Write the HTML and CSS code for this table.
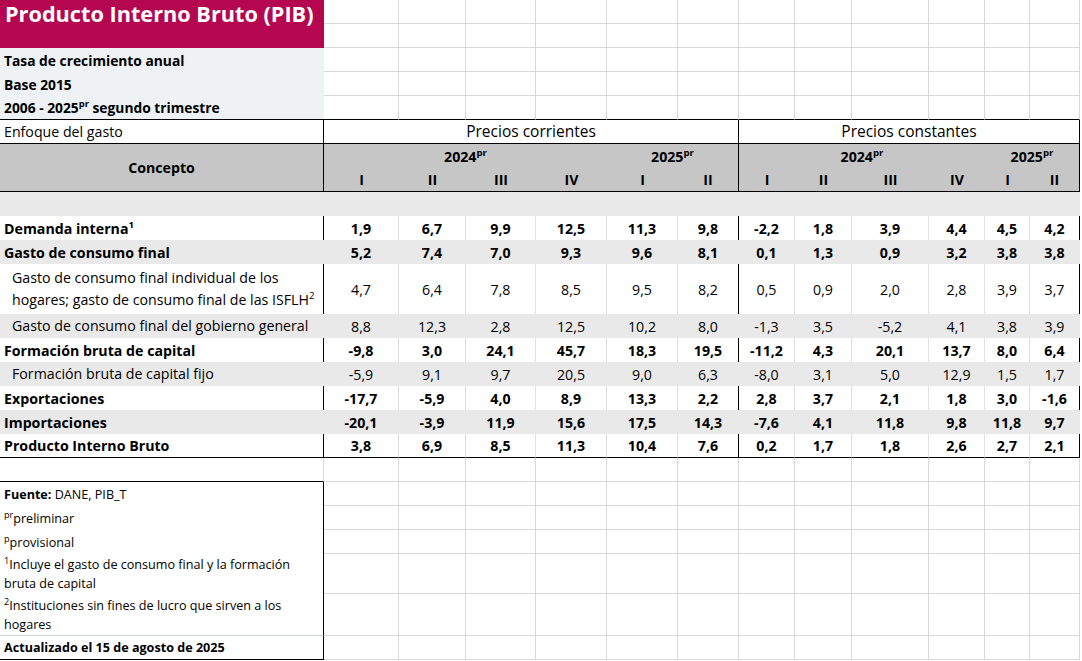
FILE: index.html
```html
<!DOCTYPE html>
<html lang="es">
<head>
<meta charset="utf-8">
<title>Producto Interno Bruto (PIB)</title>
<link rel="stylesheet" href="styles.css">
</head>
<body>
<table class="sheet">
<colgroup>
<col class="ca"><col class="cb"><col class="cc"><col class="cd"><col class="ce"><col class="cf"><col class="cg"><col class="ch"><col class="ci"><col class="cj"><col class="ck"><col class="cl"><col class="cm">
</colgroup>
<tbody>
<tr>
<td class="title" rowspan="2">Producto Interno Bruto (PIB)</td>
<td class="g"></td><td class="g"></td><td class="g"></td><td class="g"></td><td class="g"></td><td class="g"></td><td class="g"></td><td class="g"></td><td class="g"></td><td class="g"></td><td class="g"></td><td class="g"></td>
</tr>
<tr>
<td class="g"></td><td class="g"></td><td class="g"></td><td class="g"></td><td class="g"></td><td class="g"></td><td class="g"></td><td class="g"></td><td class="g"></td><td class="g"></td><td class="g"></td><td class="g"></td>
</tr>
<tr>
<td class="sub">Tasa de crecimiento anual</td>
<td class="g"></td><td class="g"></td><td class="g"></td><td class="g"></td><td class="g"></td><td class="g"></td><td class="g"></td><td class="g"></td><td class="g"></td><td class="g"></td><td class="g"></td><td class="g"></td>
</tr>
<tr>
<td class="sub">Base 2015</td>
<td class="g"></td><td class="g"></td><td class="g"></td><td class="g"></td><td class="g"></td><td class="g"></td><td class="g"></td><td class="g"></td><td class="g"></td><td class="g"></td><td class="g"></td><td class="g"></td>
</tr>
<tr class="sep">
<td class="sub">2006 - 2025<sup>pr</sup> segundo trimestre</td>
<td class="g"></td><td class="g"></td><td class="g"></td><td class="g"></td><td class="g"></td><td class="g"></td><td class="g"></td><td class="g"></td><td class="g"></td><td class="g"></td><td class="g"></td><td class="g"></td>
</tr>
<tr class="sep group">
<td class="lbl br">Enfoque del gasto</td>
<td class="br price" colspan="6">Precios corrientes</td>
<td class="br price" colspan="6">Precios constantes</td>
</tr>
<tr class="head">
<td class="concept br" rowspan="2">Concepto</td>
<td colspan="4">2024<sup>pr</sup></td>
<td class="br" colspan="2">2025<sup>pr</sup></td>
<td colspan="4">2024<sup>pr</sup></td>
<td class="br" colspan="2">2025<sup>pr</sup></td>
</tr>
<tr class="head sep">
<td>I</td><td>II</td><td>III</td><td>IV</td><td>I</td><td class="br">II</td>
<td>I</td><td>II</td><td>III</td><td>IV</td><td>I</td><td class="br">II</td>
</tr>
<tr class="row shade">
<td class="lbl br"></td>
<td></td><td></td><td></td><td></td><td></td><td class="br"></td>
<td></td><td></td><td></td><td></td><td></td><td class="br"></td>
</tr>
<tr class="row bold">
<td class="lbl br">Demanda interna<sup>1</sup></td>
<td>1,9</td><td>6,7</td><td>9,9</td><td>12,5</td><td>11,3</td><td class="br">9,8</td>
<td>-2,2</td><td>1,8</td><td>3,9</td><td>4,4</td><td>4,5</td><td class="br">4,2</td>
</tr>
<tr class="row shade bold">
<td class="lbl br">Gasto de consumo final</td>
<td>5,2</td><td>7,4</td><td>7,0</td><td>9,3</td><td>9,6</td><td class="br">8,1</td>
<td>0,1</td><td>1,3</td><td>0,9</td><td>3,2</td><td>3,8</td><td class="br">3,8</td>
</tr>
<tr class="row tall">
<td class="lbl ind br">Gasto de consumo final individual de los<br>hogares; gasto de consumo final de las ISFLH<sup>2</sup></td>
<td>4,7</td><td>6,4</td><td>7,8</td><td>8,5</td><td>9,5</td><td class="br">8,2</td>
<td>0,5</td><td>0,9</td><td>2,0</td><td>2,8</td><td>3,9</td><td class="br">3,7</td>
</tr>
<tr class="row shade">
<td class="lbl ind br">Gasto de consumo final del gobierno general</td>
<td>8,8</td><td>12,3</td><td>2,8</td><td>12,5</td><td>10,2</td><td class="br">8,0</td>
<td>-1,3</td><td>3,5</td><td>-5,2</td><td>4,1</td><td>3,8</td><td class="br">3,9</td>
</tr>
<tr class="row bold">
<td class="lbl br">Formación bruta de capital</td>
<td>-9,8</td><td>3,0</td><td>24,1</td><td>45,7</td><td>18,3</td><td class="br">19,5</td>
<td>-11,2</td><td>4,3</td><td>20,1</td><td>13,7</td><td>8,0</td><td class="br">6,4</td>
</tr>
<tr class="row shade">
<td class="lbl ind br">Formación bruta de capital fijo</td>
<td>-5,9</td><td>9,1</td><td>9,7</td><td>20,5</td><td>9,0</td><td class="br">6,3</td>
<td>-8,0</td><td>3,1</td><td>5,0</td><td>12,9</td><td>1,5</td><td class="br">1,7</td>
</tr>
<tr class="row bold">
<td class="lbl br">Exportaciones</td>
<td>-17,7</td><td>-5,9</td><td>4,0</td><td>8,9</td><td>13,3</td><td class="br">2,2</td>
<td>2,8</td><td>3,7</td><td>2,1</td><td>1,8</td><td>3,0</td><td class="br">-1,6</td>
</tr>
<tr class="row shade bold">
<td class="lbl br">Importaciones</td>
<td>-20,1</td><td>-3,9</td><td>11,9</td><td>15,6</td><td>17,5</td><td class="br">14,3</td>
<td>-7,6</td><td>4,1</td><td>11,8</td><td>9,8</td><td>11,8</td><td class="br">9,7</td>
</tr>
<tr class="row bold sep">
<td class="lbl br">Producto Interno Bruto</td>
<td>3,8</td><td>6,9</td><td>8,5</td><td>11,3</td><td>10,4</td><td class="br">7,6</td>
<td>0,2</td><td>1,7</td><td>1,8</td><td>2,6</td><td>2,7</td><td class="br">2,1</td>
</tr>
<tr>
<td class="gap"></td>
<td class="g"></td><td class="g"></td><td class="g"></td><td class="g"></td><td class="g"></td><td class="g"></td><td class="g"></td><td class="g"></td><td class="g"></td><td class="g"></td><td class="g"></td><td class="g"></td>
</tr>
<tr>
<td class="note"><b>Fuente:</b> DANE, PIB_T</td>
<td class="g"></td><td class="g"></td><td class="g"></td><td class="g"></td><td class="g"></td><td class="g"></td><td class="g"></td><td class="g"></td><td class="g"></td><td class="g"></td><td class="g"></td><td class="g"></td>
</tr>
<tr>
<td class="note"><sup>pr</sup>preliminar</td>
<td class="g"></td><td class="g"></td><td class="g"></td><td class="g"></td><td class="g"></td><td class="g"></td><td class="g"></td><td class="g"></td><td class="g"></td><td class="g"></td><td class="g"></td><td class="g"></td>
</tr>
<tr>
<td class="note"><sup>p</sup>provisional</td>
<td class="g"></td><td class="g"></td><td class="g"></td><td class="g"></td><td class="g"></td><td class="g"></td><td class="g"></td><td class="g"></td><td class="g"></td><td class="g"></td><td class="g"></td><td class="g"></td>
</tr>
<tr class="n40">
<td class="note"><sup>1</sup>Incluye el gasto de consumo final y la formación<br>bruta de capital</td>
<td class="g"></td><td class="g"></td><td class="g"></td><td class="g"></td><td class="g"></td><td class="g"></td><td class="g"></td><td class="g"></td><td class="g"></td><td class="g"></td><td class="g"></td><td class="g"></td>
</tr>
<tr class="n42">
<td class="note split"><sup>2</sup>Instituciones sin fines de lucro que sirven a los<br>hogares</td>
<td class="g"></td><td class="g"></td><td class="g"></td><td class="g"></td><td class="g"></td><td class="g"></td><td class="g"></td><td class="g"></td><td class="g"></td><td class="g"></td><td class="g"></td><td class="g"></td>
</tr>
<tr>
<td class="note end"><b>Actualizado el 15 de agosto de 2025</b></td>
<td class="g"></td><td class="g"></td><td class="g"></td><td class="g"></td><td class="g"></td><td class="g"></td><td class="g"></td><td class="g"></td><td class="g"></td><td class="g"></td><td class="g"></td><td class="g"></td>
</tr>
</tbody>
</table>
</body>
</html>
```
FILE: styles.css
```css
* { box-sizing: border-box; }
html, body { margin: 0; padding: 0; background: #fff; }
body {
  font-family: "Open Sans", "Noto Sans", "Liberation Sans", sans-serif;
  color: #000;
}

.sheet {
  border-collapse: separate;
  border-spacing: 0;
  table-layout: fixed;
  width: 1080px;
  font-size: 14.2px;
}
.ca { width: 324px; }
.cb { width: 75px; }
.cc { width: 67px; }
.cd { width: 70px; }
.ce { width: 71px; }
.cf { width: 71px; }
.cg { width: 61px; }
.ch { width: 56px; }
.ci { width: 57px; }
.cj { width: 77px; }
.ck { width: 56px; }
.cl { width: 45px; }
.cm { width: 50px; }

.sheet tr { height: 24px; }
.sheet tr.tall { height: 50px; }
.sheet tr.n40 { height: 40px; }
.sheet tr.n42 { height: 42px; }

.sheet td {
  padding: 0;
  white-space: nowrap;
  vertical-align: middle;
  line-height: 17px;
  overflow: hidden;
  text-align: center;
}

.sheet sup {
  font-size: 0.68em;
  line-height: 0;
  vertical-align: 0.62em;
}

/* grid lines of the empty sheet */
.sheet td.g {
  border-right: 1px solid #d8d8d8;
  border-bottom: 1px solid #d8d8d8;
}

.sheet td.title {
  background: #b4074f;
  color: #fff;
  font-size: 21.7px;
  font-weight: 700;
  text-align: left;
  vertical-align: top;
  padding: 0 0 0 5px;
  line-height: 28px;
}

.sheet td.sub {
  background: #eef2f5;
  font-weight: 700;
  font-size: 13.8px;
  text-align: left;
  padding-left: 4px;
}

.sheet tr.sep td { border-bottom: 1px solid #000; }
.sheet td.br { border-right: 1px solid #000; }

.sheet td.price { font-size: 15.5px; }

.head td {
  background: #c6c6c6;
  font-weight: 700;
}
.sheet td.concept { border-bottom: 1px solid #000; }

.row td { border-right: 1px solid #e0e0e0; }
.row.shade td { background: #e9e9e9; border-right-color: #e9e9e9; }
.row.bold td { font-weight: 700; }

.sheet td.lbl {
  text-align: left;
  padding-left: 4px;
}
.sheet td.ind {
  padding-left: 12px;
  font-weight: 400;
  line-height: 22px;
}

.sheet td.gap {
  border-right: 1px solid #d8d8d8;
  border-bottom: 1px solid #000;
}

.sheet td.note {
  text-align: left;
  padding-left: 4px;
  font-size: 12.6px;
  line-height: 19px;
  border-right: 1px solid #000;
}
.sheet td.note sup { font-size: 0.72em; vertical-align: 0.6em; }
.sheet td.split { border-bottom: 1px solid #cfd6cf; }
.sheet td.end { border-bottom: 1px solid #000; }
```
